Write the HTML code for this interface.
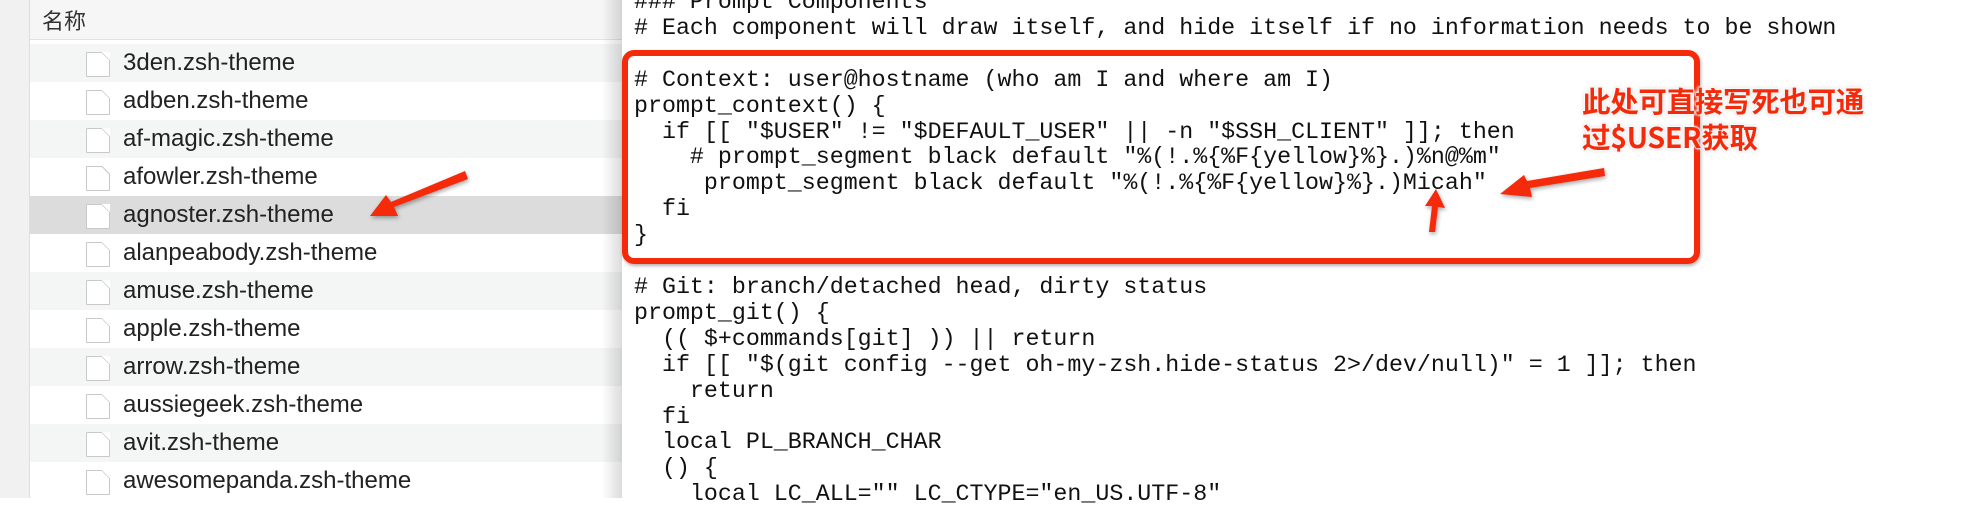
<!DOCTYPE html>
<html><head><meta charset="utf-8"><style>
*{margin:0;padding:0;box-sizing:border-box}
body{width:1962px;height:498px;overflow:hidden;background:#fff;position:relative;font-family:"Liberation Sans","Noto Sans CJK SC",sans-serif}
#gut{position:absolute;left:0;top:0;width:30px;height:498px;background:#f1f1f1;border-right:1px solid #dedede}
#list{position:absolute;left:30px;top:0;width:592px;height:498px;background:#fff}
#hdr{position:absolute;left:0;top:0;width:592px;height:40px;background:#f6f6f6;border-bottom:1px solid #e2e2e2;font-size:22px;color:#333;padding:4px 0 0 12px}
.row{position:absolute;left:0;width:592px;height:38px;font-size:24px;color:#222;line-height:38px;padding-left:93px}
.row.g{background:#f4f5f5}
.row.s{background:#dcdcdc}
.ic{position:absolute;left:56px;top:8px;width:24px;height:25px;background:#fff;border:1px solid #c9c9c9;border-radius:1px}
.ic:after{content:"";position:absolute;right:-1px;top:-1px;width:8px;height:8px;background:linear-gradient(225deg,#fff 50%,#c9c9c9 50%,#c9c9c9 58%,#fff 58%)}
#shadow{position:absolute;left:572px;top:0;width:20px;height:498px;background:linear-gradient(90deg,rgba(0,0,0,0),rgba(0,0,0,.14))}
#code{position:absolute;left:622px;top:0;width:1340px;height:498px;background:#fff}
pre{position:absolute;left:12px;top:-10px;font-family:"Liberation Mono",monospace;font-size:23.3px;line-height:25.9px;color:#111}
#box{position:absolute;left:622px;top:50px;width:1078px;height:214px;border:6px solid #f52a0a;border-radius:12px;box-shadow:1px 2px 3px rgba(0,0,0,.3)}
#note{position:absolute;left:1582px;top:83px;font-family:"Noto Sans CJK SC","Liberation Sans",sans-serif;font-weight:bold;font-size:28.5px;line-height:36px;color:#f52a0a;text-shadow:0 0 2px #fff,0 0 2px #fff,1px 1px 3px #fff,-1px -1px 3px #fff,0 0 4px rgba(0,0,0,.35);letter-spacing:-0.3px}
</style></head><body>
<div id="gut"></div>
<div id="list">
<div id="hdr">名称</div>
<div class="row g" style="top:44px"><span class="ic"></span>3den.zsh-theme</div>
<div class="row" style="top:82px"><span class="ic"></span>adben.zsh-theme</div>
<div class="row g" style="top:120px"><span class="ic"></span>af-magic.zsh-theme</div>
<div class="row" style="top:158px"><span class="ic"></span>afowler.zsh-theme</div>
<div class="row s" style="top:196px"><span class="ic"></span>agnoster.zsh-theme</div>
<div class="row" style="top:234px"><span class="ic"></span>alanpeabody.zsh-theme</div>
<div class="row g" style="top:272px"><span class="ic"></span>amuse.zsh-theme</div>
<div class="row" style="top:310px"><span class="ic"></span>apple.zsh-theme</div>
<div class="row g" style="top:348px"><span class="ic"></span>arrow.zsh-theme</div>
<div class="row" style="top:386px"><span class="ic"></span>aussiegeek.zsh-theme</div>
<div class="row g" style="top:424px"><span class="ic"></span>avit.zsh-theme</div>
<div class="row" style="top:462px"><span class="ic"></span>awesomepanda.zsh-theme</div>
<div id="shadow"></div>
</div>
<div id="code"><pre>### Prompt Components
# Each component will draw itself, and hide itself if no information needs to be shown

# Context: user@hostname (who am I and where am I)
prompt_context() {
  if [[ "$USER" != "$DEFAULT_USER" || -n "$SSH_CLIENT" ]]; then
    # prompt_segment black default "%(!.%{%F{yellow}%}.)%n@%m"
     prompt_segment black default "%(!.%{%F{yellow}%}.)Micah"
  fi
}

# Git: branch/detached head, dirty status
prompt_git() {
  (( $+commands[git] )) || return
  if [[ "$(git config --get oh-my-zsh.hide-status 2>/dev/null)" = 1 ]]; then
    return
  fi
  local PL_BRANCH_CHAR
  () {
    local LC_ALL="" LC_CTYPE="en_US.UTF-8"</pre></div>
<div id="box"></div>
<div id="note">此处可直接写死也可通<br>过$USER获取</div>
<svg width="1962" height="498" style="position:absolute;left:0;top:0" >
<g fill="#f52a0a" style="filter:drop-shadow(1px 2px 2px rgba(0,0,0,.35))">
<polygon points="465,171 468,179 394,207 398,216 370,216 386,195 391,202"/>
<polygon points="1604,168 1605,176 1530,188 1532,197 1500,194 1524,175 1527,181"/>
<polygon points="1429,232 1435,232 1438,207 1445,208 1436,189 1425,206 1432,206"/>
</g></svg>
</body></html>
